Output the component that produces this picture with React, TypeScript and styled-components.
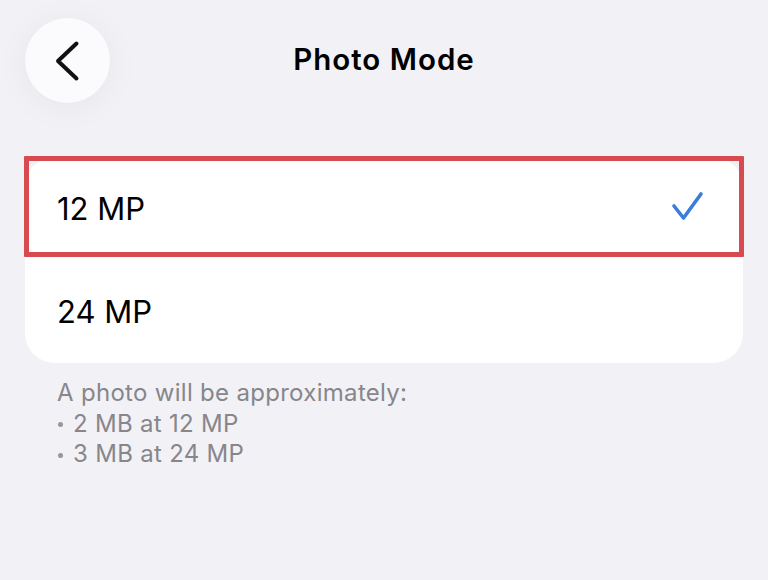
import React from "react";
import styled, { createGlobalStyle } from "styled-components";

const Global = createGlobalStyle`
  html, body {
    margin: 0;
    padding: 0;
    background: #f2f1f6;
  }
  body {
    font-family: Inter, "Open Sans", "Liberation Sans", sans-serif;
    color: #000;
    -webkit-font-smoothing: antialiased;
  }
`;

const Screen = styled.div`
  width: 768px;
  height: 580px;
  background: #f2f1f6;
  overflow: hidden;
`;

const Header = styled.header`
  display: grid;
  grid-template-columns: 1fr auto 1fr;
  align-items: center;
  padding: 18px 25px 0;
`;

const BackButton = styled.button`
  width: 85px;
  height: 85px;
  border-radius: 50%;
  border: none;
  padding: 0;
  background: #fbfbfd;
  box-shadow: 0 4px 34px rgba(0, 0, 0, 0.05);
  display: flex;
  align-items: center;
  justify-content: center;
  justify-self: start;
`;

const Title = styled.h1`
  margin: 0;
  font-size: 29.5px;
  font-weight: 600;
  letter-spacing: 1px;
  padding-bottom: 4px;
`;

const Card = styled.section`
  margin: 54px 25px 0;
  background: #fff;
  border-radius: 30px;
`;

const Row = styled.div<{ $highlight?: boolean }>`
  position: relative;
  height: ${(p) => (p.$highlight ? 100 : 106)}px;
  display: flex;
  align-items: center;
  justify-content: space-between;
  padding: 0 38px 0 32px;
  font-size: 31px;
  font-weight: 400;

  ${(p) =>
    p.$highlight &&
    `
    &::after {
      content: "";
      position: absolute;
      top: -1px;
      left: -1px;
      right: -1px;
      bottom: 0;
      border: 5px solid #d84a4f;
      border-radius: 1px;
      pointer-events: none;
    }
  `}
`;

const RowLabel = styled.span`
  padding-top: 2px;
`;

const Footer = styled.div`
  padding: 15px 57px 0;
  font-size: 24px;
  letter-spacing: 0.3px;
  line-height: 30.5px;
  color: #87868b;
`;

const Line = styled.div`
  display: flex;
  align-items: center;
`;

const Bullet = styled.span`
  width: 5px;
  height: 5px;
  border-radius: 50%;
  background: #97969b;
  margin: 2px 10px 0 1px;
`;

const Chevron = () => (
  <svg width="30" height="42" viewBox="0 0 30 42">
    <path
      d="M23.5 3.5 L5 21 L23.5 38.5"
      fill="none"
      stroke="#111"
      strokeWidth="4"
      strokeLinecap="round"
      strokeLinejoin="round"
    />
  </svg>
);

const Check = () => (
  <svg width="34" height="32" viewBox="0 0 34 32">
    <path
      d="M3 15 L12.5 27 L30 3"
      fill="none"
      stroke="#3a7ddf"
      strokeWidth="3.6"
      strokeLinecap="round"
      strokeLinejoin="round"
    />
  </svg>
);

export default function App() {
  return (
    <Screen>
      <Global />
      <Header>
        <BackButton aria-label="Back">
          <Chevron />
        </BackButton>
        <Title>Photo Mode</Title>
        <span />
      </Header>
      <Card>
        <Row $highlight>
          <RowLabel>12 MP</RowLabel>
          <Check />
        </Row>
        <Row>
          <RowLabel>24 MP</RowLabel>
        </Row>
      </Card>
      <Footer>
        <Line>A photo will be approximately:</Line>
        <Line>
          <Bullet />2 MB at 12 MP
        </Line>
        <Line>
          <Bullet />3 MB at 24 MP
        </Line>
      </Footer>
    </Screen>
  );
}
